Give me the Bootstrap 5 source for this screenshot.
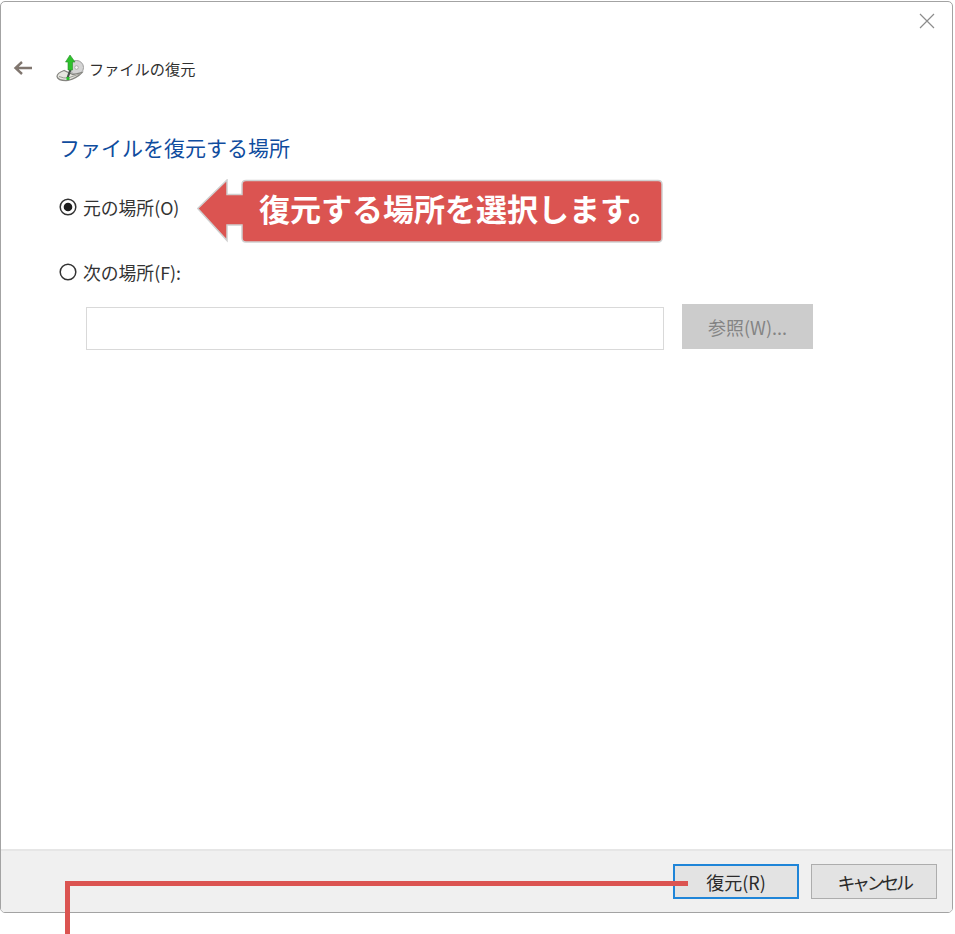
<!DOCTYPE html>
<html lang="ja">
<head>
<meta charset="utf-8">
<title>ファイルの復元</title>
<link href="https://cdn.jsdelivr.net/npm/bootstrap@5.3.0/dist/css/bootstrap.min.css" rel="stylesheet">
<style>
html,body{margin:0;background:#fff;}
body{font-family:"Noto Sans CJK JP","Noto Sans",sans-serif;color:#2b2b2b;width:955px;height:934px;overflow:hidden;position:relative;}
.dlg{width:953px;height:912px;margin-top:1px;border:1px solid #a3a3a3;border-radius:5px;background:#fff;box-sizing:border-box;overflow:hidden;}
.dlg-top{height:51px;padding:11px 17px 0 0;}
.dlg-close{width:16px;height:16px;display:block;}
.dlg-titlebar{height:30px;padding-left:12px;}
.back-ico{width:20px;height:16px;margin-right:23px;}
.drive-ico{width:28px;height:28px;margin-right:5px;}
.dlg-title{font-size:15.2px;line-height:30px;color:#2f2f2f;}
.dlg-main{padding:48px 0 0 58px;}
.dlg-h{font-size:21px;line-height:32px;color:#0f4c9e;font-weight:400;margin:0;}
.opt{font-size:17.8px;line-height:24px;color:#333;gap:6px;}
.opt-a{margin-top:32px;}
.opt-b{margin-top:41px;}
.radio-ico{width:18px;height:18px;flex:none;}
.path-row{margin:23px 0 0 27px;}
.path-box{width:578px;height:43px;border:1px solid #d9d9d9;background:#fff;}
.btn.browse-btn,.btn.browse-btn:disabled{width:131px;height:45px;margin:-3px 0 0 18px;background:#cccccc;border:1px solid #cccccc;border-radius:0;color:#848484;font-size:18px;padding:0;line-height:1;opacity:1;}
.dlg-foot{height:63px;background:#f0f0f0;border-top:2px solid #e6e6e6;padding:13px 15px 0 0;gap:12px;}
.btn.foot-btn{width:126px;height:35px;border-radius:0;background:#e3e3e3;border:1px solid #adadad;color:#2b2b2b;font-size:18px;padding:0;line-height:1;}
.foot-narrow{letter-spacing:-3.400px;}
.btn.foot-primary{border:2px solid #1f85d8;}
.anno-arrow{position:absolute;left:197px;top:179px;width:467px;height:65px;}
.anno-text{position:absolute;left:259px;top:186px;font-size:31px;line-height:44px;font-weight:700;color:#fff;white-space:nowrap;}
.anno-h{position:absolute;left:65px;top:881px;width:623px;height:5px;background:#db5451;}
.anno-v{position:absolute;left:65px;top:881px;width:5px;height:53px;background:#db5451;}
</style>
</head>
<body>
<div class="dlg d-flex flex-column">
  <div class="dlg-top d-flex justify-content-end">
    <svg class="dlg-close" viewBox="0 0 16 16"><path d="M1 1L15 15M15 1L1 15" stroke="#8c8c8c" stroke-width="1.2" fill="none"/></svg>
  </div>
  <div class="dlg-titlebar d-flex align-items-center">
    <svg class="back-ico" viewBox="0 0 20 16"><path d="M19 8H3M9 2L2.500 8L9 14" stroke="#80766f" stroke-width="2.400" fill="none"/></svg>
    <svg class="drive-ico" viewBox="0 0 28 28">
      <circle cx="20.500" cy="13.500" r="7" fill="#d4d4d4" stroke="#9c9c9c"/>
      <circle cx="20.500" cy="13.500" r="1.800" fill="#f6f6f6" stroke="#999" stroke-width=".7"/>
      <path d="M1 22.500Q1 19 8 16.500L17 20.500L26 18.500Q21 24 12 26.500Q2 27 1 22.500Z" fill="#e6e6e0" stroke="#858580" stroke-width="1.200"/>
      <path d="M3 22.500Q8 24.500 12 24L25 19.500" fill="none" stroke="#9d9d97"/>
      <path d="M15 14L11.500 24" stroke="#46524a" stroke-width="2.200" fill="none"/>
      <path d="M12 16V8H9.500L14 1L19 8H16.500V16Z" fill="#2ec12c" stroke="#2a8f2c" stroke-width=".6"/>
      <rect x="10.500" y="23" width="3" height="3" fill="#27c02a"/>
    </svg>
    <span class="dlg-title">ファイルの復元</span>
  </div>
  <div class="dlg-main flex-grow-1">
    <h1 class="dlg-h">ファイルを復元する場所</h1>
    <div class="opt opt-a d-flex align-items-center">
      <svg class="radio-ico" viewBox="0 0 18 18"><circle cx="9" cy="9" r="7.800" fill="#fff" stroke="#333" stroke-width="1.500"/><circle cx="9" cy="9" r="4.300" fill="#1d1d1d"/></svg>
      <span>元の場所(O)</span>
    </div>
    <div class="opt opt-b d-flex align-items-center">
      <svg class="radio-ico" viewBox="0 0 18 18"><circle cx="9" cy="9" r="7.800" fill="#fff" stroke="#333" stroke-width="1.500"/></svg>
      <span>次の場所(F):</span>
    </div>
    <div class="path-row d-flex align-items-start">
      <div class="path-box"></div>
      <button class="btn browse-btn" type="button" disabled>参照(W)...</button>
    </div>
  </div>
  <div class="dlg-foot d-flex justify-content-end align-items-start">
    <button class="btn foot-btn foot-primary" type="button">復元(R)</button>
    <button class="btn foot-btn foot-narrow" type="button">キャンセル</button>
  </div>
</div>
<svg class="anno-arrow" viewBox="0 0 467 65">
  <path d="M.75 29.500L30 1V15.500H45V5.500Q45 1.500 49 1.500H461Q465 1.500 465 5.500V59Q465 63 461 63H49Q45 63 45 59V46H30V61.500Z" fill="#db5451" stroke="#cfcfcf" stroke-width="1.500"/>
</svg>
<div class="anno-text">復元する場所を選択します。</div>
<div class="anno-h"></div>
<div class="anno-v"></div>
<script src="https://cdn.jsdelivr.net/npm/bootstrap@5.3.0/dist/js/bootstrap.bundle.min.js"></script>
</body>
</html>
